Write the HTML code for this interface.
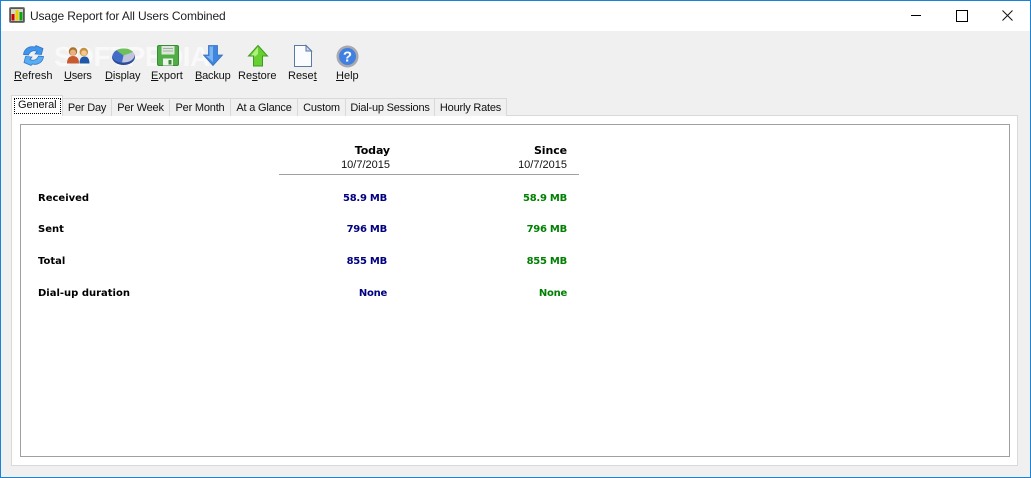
<!DOCTYPE html>
<html><head><meta charset="utf-8"><style>
html,body{margin:0;padding:0}
body{width:1031px;height:478px;position:relative;overflow:hidden;background:#f0f0f0;font-family:"Liberation Sans",sans-serif;color:#000}
.a{position:absolute}
.t{position:absolute;white-space:nowrap;font-size:11px;line-height:14px;color:#111}
.b{font-family:"DejaVu Sans",sans-serif;font-weight:bold;font-size:10px;color:#000}
.h{font-size:11px;letter-spacing:-.1px}
.tab{position:absolute;top:98px;border:1px solid #d9d9d9;border-bottom:none;background:#f0f0f0;text-align:center;font-size:11px;letter-spacing:-.2px;line-height:18px;white-space:nowrap;box-sizing:border-box;height:18px;color:#111}
.nv{color:#000080;letter-spacing:-.25px}.gr{color:#008000;letter-spacing:-.25px}
svg{position:absolute;overflow:visible}
u{text-underline-offset:1px}
</style></head><body>
<div class="a" style="left:0;top:0;width:1031px;height:31px;background:#fff"></div>
<div class="a" style="left:0;top:0;width:1031px;height:1px;background:#1883d7"></div>
<div class="a" style="left:0;top:477px;width:1031px;height:1px;background:#1883d7"></div>
<div class="a" style="left:0;top:0;width:1px;height:478px;background:#1883d7"></div>
<div class="a" style="left:1030px;top:0;width:1px;height:478px;background:#1883d7"></div>

<svg style="left:9px;top:7px" width="16" height="16" viewBox="0 0 16 16"><rect x=".5" y=".5" width="15" height="15" rx="1.5" fill="#555" stroke="#777"/><rect x="2" y="2" width="12" height="12" fill="#d8d8c8"/><rect x="2.5" y="7" width="3" height="6.5" fill="#d00000"/><rect x="6.5" y="3" width="3" height="10.5" fill="#e8d000"/><rect x="10.5" y="5" width="3" height="8.5" fill="#10a010"/></svg>
<div class="t" style="left:30px;top:9px;font-size:12px;letter-spacing:-.13px;color:#222">Usage Report for All Users Combined</div>

<div class="a" style="left:911px;top:15px;width:10px;height:1px;background:#000"></div>
<div class="a" style="left:956px;top:10px;width:10px;height:10px;border:1px solid #000"></div>
<svg style="left:1002px;top:10px" width="11" height="11" viewBox="0 0 11 11"><path d="M.5.5l10 10M10.5.5l-10 10" stroke="#111" stroke-width="1" fill="none"/></svg>

<!-- watermark -->
<div class="t" style="left:54px;top:42px;font-size:28px;line-height:30px;font-weight:bold;color:#fff;opacity:.6;letter-spacing:-.5px">SOFTPEDIA</div>

<!-- Refresh -->
<svg style="left:22px;top:45px" width="23" height="21" viewBox="0 0 23 21"><path d="M1.500 9.500C2 4 7 .5 12.500 2L14 .5 21 3.500 19.500 9.500 13 9l2-2.500C11.500 5 8 6 6.500 10z" fill="#3f96ea" stroke="#2a6fc4" stroke-width=".7"/><path d="M21.500 11.500C21 17 16 20.500 10.500 19L9 20.500 2 17.500 3.500 11.500 10 12l-2 2.500c3.500 1.500 7 .5 8.500-3.500z" fill="#58aef2" stroke="#2a6fc4" stroke-width=".7"/></svg>
<!-- Users -->
<svg style="left:67px;top:47px" width="23" height="17" viewBox="0 0 23 17"><path d="M12.500 16.500c0-5 2-7 5-7s5 2 5 7z" fill="#2058a8"/><circle cx="16.800" cy="5" r="4.200" fill="#c89040"/><circle cx="17" cy="6" r="2.800" fill="#f0c890"/><path d="M0 16.500c0-5 2-7.500 6-7.500s6 2.500 6 7.500z" fill="#c85a30"/><circle cx="6" cy="4.500" r="4.200" fill="#a87028"/><circle cx="6" cy="5.500" r="3" fill="#eab080"/></svg>
<!-- Display -->
<svg style="left:112px;top:48px" width="23" height="17" viewBox="0 0 23 17"><ellipse cx="11.500" cy="9" rx="11.500" ry="8" fill="#2b4a98"/><ellipse cx="11.500" cy="7.500" rx="11" ry="7" fill="#c0c4dc"/><path d="M11.500 7.500L4.500 2.200C7 1 9 .5 11.500.5 16 .5 19 1.800 21 4z" fill="#70c058"/><path d="M11.500 7.500L4.500 2.200C1 4.500-.5 8 2 11c2 2 5 3.500 8 3.500z" fill="#3f6cc8"/></svg>
<!-- Export -->
<svg style="left:157px;top:45px" width="22" height="21" viewBox="0 0 22 21"><rect x=".5" y=".5" width="21" height="20" rx="1.500" fill="#4fae45" stroke="#3a8a38"/><rect x="4.500" y="1" width="13" height="8.500" fill="#dde6dd"/><path d="M6 3.500h10M6 6h10" stroke="#a0b4a0"/><rect x="6" y="13.500" width="10" height="7" fill="#eef3ee"/><rect x="11.500" y="15" width="3" height="4.500" fill="#3a8a38"/></svg>
<!-- Backup -->
<svg style="left:203px;top:45px" width="20" height="21" viewBox="0 0 20 21"><path d="M5.500.5h9V10h5L10 20.500.500 10h5z" fill="#3f86e0" stroke="#3a6fc0" stroke-width=".8"/><path d="M6.500 1.500h3.500V17L3 11h3.500z" fill="#7cb4f0"/></svg>
<!-- Restore -->
<svg style="left:248px;top:45px" width="20" height="22" viewBox="0 0 20 22"><path d="M10 .5L19.500 11H14.500v10h-9V11H.5z" fill="#66d030" stroke="#3f9a20"/><path d="M10 2L3 10.500h3.500V12L10 9z" fill="#b0f080"/></svg>
<!-- Reset -->
<svg style="left:294px;top:45px" width="18" height="22" viewBox="0 0 18 22"><path d="M.5.5H12L17.500 6V21.500H.5z" fill="#fafcff" stroke="#5a78a8"/><path d="M12 .5V6h5.500z" fill="#cfdcf0" stroke="#5a78a8"/></svg>
<!-- Help -->
<svg style="left:336px;top:45px" width="23" height="23" viewBox="0 0 23 23"><circle cx="11.500" cy="11.500" r="11" fill="#a8a8b0"/><circle cx="11.500" cy="11.500" r="8.500" fill="#3f80e0"/><text x="11.500" y="16.500" text-anchor="middle" font-family="Liberation Sans" font-weight="bold" font-size="15" fill="#fff">?</text></svg>

<div class="t" style="left:14px;top:69px"><u>R</u>efresh</div>
<div class="t" style="left:64px;top:69px;letter-spacing:-.2px"><u>U</u>sers</div>
<div class="t" style="left:105px;top:69px;letter-spacing:-.1px"><u>D</u>isplay</div>
<div class="t" style="left:151px;top:69px"><u>E</u>xport</div>
<div class="t" style="left:195px;top:69px;letter-spacing:-.2px"><u>B</u>ackup</div>
<div class="t" style="left:238px;top:69px">Re<u>s</u>tore</div>
<div class="t" style="left:288px;top:69px">Rese<u>t</u></div>
<div class="t" style="left:336px;top:69px"><u>H</u>elp</div>

<!-- panel -->
<div class="a" style="left:11px;top:115px;width:1007px;height:351px;box-sizing:border-box;border:1px solid #d9d9d9;background:#fff"></div>
<div class="a" style="left:20px;top:124px;width:990px;height:333px;box-sizing:border-box;border:1px solid #a0a0a0;background:#fff"></div>

<!-- tabs -->
<div class="tab" style="left:62px;width:50px">Per Day</div>
<div class="tab" style="left:111px;width:59px">Per Week</div>
<div class="tab" style="left:169px;width:62px">Per Month</div>
<div class="tab" style="left:230px;width:68px">At a Glance</div>
<div class="tab" style="left:297px;width:49px">Custom</div>
<div class="tab" style="left:345px;width:90px">Dial-up Sessions</div>
<div class="tab" style="left:434px;width:73px">Hourly Rates</div>
<div class="a" style="left:11px;top:95px;width:52px;height:21px;box-sizing:border-box;border:1px solid #d9d9d9;border-bottom:none;background:#fff"></div>
<div class="a" style="left:14px;top:98px;width:47px;height:16px;box-sizing:border-box;border:1px dotted #000"></div>
<div class="t" style="left:18px;top:98px;letter-spacing:-.1px">General</div>

<!-- table -->
<div class="a" style="left:279px;top:174px;width:300px;height:1px;background:#a0a0a0"></div>
<div class="t b h" style="right:641px;top:144px">Today</div>
<div class="t" style="right:641px;top:158px">10/7/2015</div>
<div class="t b h" style="right:464px;top:144px">Since</div>
<div class="t" style="right:464px;top:158px">10/7/2015</div>

<div class="t b" style="left:38px;top:192px">Received</div>
<div class="t b nv" style="right:644px;top:192px">58.9 MB</div>
<div class="t b gr" style="right:464px;top:192px">58.9 MB</div>
<div class="t b" style="left:38px;top:223px">Sent</div>
<div class="t b nv" style="right:644px;top:223px">796 MB</div>
<div class="t b gr" style="right:464px;top:223px">796 MB</div>
<div class="t b" style="left:38px;top:255px">Total</div>
<div class="t b nv" style="right:644px;top:255px">855 MB</div>
<div class="t b gr" style="right:464px;top:255px">855 MB</div>
<div class="t b" style="left:38px;top:287px">Dial-up duration</div>
<div class="t b nv" style="right:644px;top:287px">None</div>
<div class="t b gr" style="right:464px;top:287px">None</div>
</body></html>
